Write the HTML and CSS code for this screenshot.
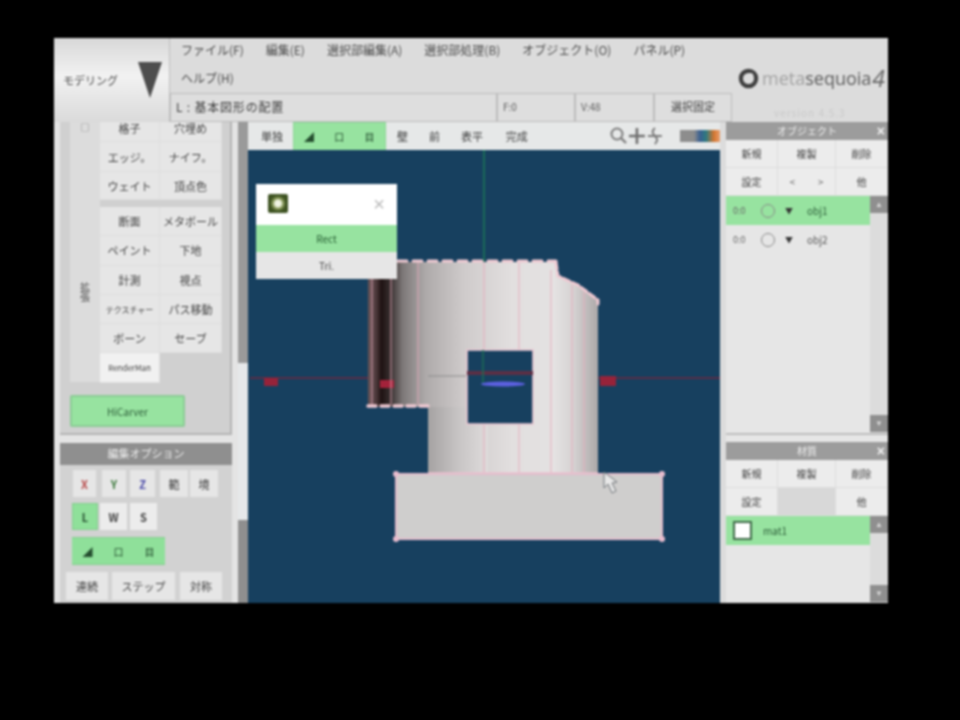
FILE: index.html
```html
<!DOCTYPE html>
<html lang="ja">
<head>
<meta charset="utf-8">
<title>Metasequoia 4</title>
<link rel="stylesheet" href="styles.css">
</head>
<body>
<div class="window">
  <header class="head">
    <div class="mode"><span class="mode-label">モデリング</span><svg class="mode-arrow" viewBox="0 0 24 36"><polygon points="0,0 24,0 12,36"/></svg></div>
    <div class="head-main">
      <div class="head-top">
        <nav class="menu">
          <span>ファイル(F)</span><span>編集(E)</span><span>選択部編集(A)</span><span>選択部処理(B)</span><span>オブジェクト(O)</span><span>パネル(P)</span><span>ヘルプ(H)</span>
        </nav>
        <div class="logo">
          <svg class="logo-mark" viewBox="0 0 22 22"><circle cx="11" cy="11" r="8" fill="none" stroke="#3f3f3f" stroke-width="4.4"/><circle cx="13" cy="8.5" r="3.2" fill="#dcdcdc"/></svg>
          <span class="logo-a">meta</span><span class="logo-b">sequoia</span><span class="logo-c">4</span>
        </div>
      </div>
      <div class="status">
        <div class="cell cell-wide">L : 基本図形の配置</div>
        <div class="cell cell-f">F:0</div>
        <div class="cell cell-v">V:48</div>
        <div class="cell cell-btn">選択固定</div>
        <div class="version">version 4.5.3</div>
      </div>
    </div>
  </header>

  <div class="body">
    <aside class="left">
      <div class="left-main">
        <section class="tools">
          <div class="side-tab"><span class="side-top">□</span><span class="side-label">拡張</span></div>
          <div class="tool-col">
            <div class="tool-grid">
              <div class="tb tb-cut">格子</div><div class="tb tb-cut">穴埋め</div>
              <div class="tb">エッジ。</div><div class="tb">ナイフ。</div>
              <div class="tb">ウェイト</div><div class="tb">頂点色</div>
            </div>
            <div class="tool-grid tool-grid-2">
              <div class="tb">断面</div><div class="tb">メタボール</div>
              <div class="tb">ペイント</div><div class="tb">下地</div>
              <div class="tb">計測</div><div class="tb">視点</div>
              <div class="tb tb-small">テクスチャー</div><div class="tb">パス移動</div>
              <div class="tb">ボーン</div><div class="tb">セーブ</div>
              <div class="tb tb-small tb-white">RenderMan</div>
            </div>
          </div>
          <div class="hicarver">HiCarver</div>
        </section>
        <section class="options">
          <div class="opt-title">編集オプション</div>
          <div class="opt-row opt-row-1">
            <div class="ob ob-x">X</div><div class="ob ob-y">Y</div><div class="ob ob-z">Z</div><div class="ob ob-k">範</div><div class="ob ob-k">境</div>
          </div>
          <div class="opt-row opt-row-2">
            <div class="ob ob-on">L</div><div class="ob ob-w">W</div><div class="ob ob-w">S</div>
          </div>
          <div class="opt-row opt-row-3">
            <div class="ob ob-on ob-join">◢</div><div class="ob ob-on ob-join">口</div><div class="ob ob-on ob-join">目</div>
          </div>
          <div class="opt-row opt-row-4">
            <div class="ob ob-s1">連続</div><div class="ob ob-s2">ステップ</div><div class="ob ob-s3">対称</div>
          </div>
        </section>
      </div>
      <div class="lscroll"><div class="ls-a"></div><div class="ls-b"></div><div class="ls-c"></div></div>
    </aside>

    <main class="center">
      <div class="toolbar">
        <div class="vb vb-1">単独</div>
        <div class="vgroup"><div class="vb vb-on">◢</div><div class="vb vb-on">口</div><div class="vb vb-on">目</div></div>
        <div class="vb vb-2">壁</div>
        <div class="vb vb-3">前</div>
        <div class="vb vb-4">表平</div>
        <div class="vb vb-5">完成</div>
        <svg class="view-icons" viewBox="0 0 56 22">
          <circle cx="7" cy="9" r="5.5" fill="none" stroke="#7c7c7c" stroke-width="2"/>
          <line x1="11" y1="13" x2="16" y2="18" stroke="#7c7c7c" stroke-width="2.4"/>
          <path d="M27 3v16M19 11h16" stroke="#707070" stroke-width="2.6" fill="none"/>
          <path d="M38 11h14M45 3c-3 3-3 5 0 8s3 5 0 8" stroke="#7c7c7c" stroke-width="2" fill="none"/>
        </svg>
        <div class="swatch"></div>
      </div>
      <div class="viewport">
        <svg class="scene" viewBox="248 150 472 453" preserveAspectRatio="none">
          <defs>
            <linearGradient id="gBack" gradientUnits="userSpaceOnUse" x1="368" y1="0" x2="560" y2="0">
              <stop offset="0" stop-color="#6a5557"/>
              <stop offset=".04" stop-color="#503c3e"/>
              <stop offset=".07" stop-color="#1e1212"/>
              <stop offset=".12" stop-color="#3a3232"/>
              <stop offset=".18" stop-color="#7d7878"/>
              <stop offset=".3" stop-color="#aeaaaa"/>
              <stop offset=".5" stop-color="#cfcbcb"/>
              <stop offset=".75" stop-color="#e2dfdf"/>
              <stop offset="1" stop-color="#e4e2e2"/>
            </linearGradient>
            <linearGradient id="gRight" gradientUnits="userSpaceOnUse" x1="552" y1="0" x2="600" y2="0">
              <stop offset="0" stop-color="#e6e4e4"/>
              <stop offset=".45" stop-color="#d5d2d2"/>
              <stop offset="1" stop-color="#a9a5a5"/>
            </linearGradient>
            <linearGradient id="gLow" gradientUnits="userSpaceOnUse" x1="428" y1="0" x2="490" y2="0">
              <stop offset="0" stop-color="#a5a2a2"/>
              <stop offset=".5" stop-color="#c8c5c5"/>
              <stop offset="1" stop-color="#e0dddd"/>
            </linearGradient>
          </defs>
          <line x1="484" y1="150" x2="484" y2="262" stroke="#1e7a57" stroke-width="1.5"/>
          <line x1="250" y1="378" x2="720" y2="378" stroke="#70293f" stroke-width="1.5"/>
          <rect x="264" y="378" width="14" height="8" fill="#96233a"/>
          <rect x="600" y="376" width="16" height="10" fill="#96233a"/>
          <polygon points="368,262 557,262 557,275 577,285 598,300 598,473 428,473 428,407 368,407" fill="url(#gBack)"/>
          <polygon points="552,272 557,275 577,285 598,300 598,473 552,473" fill="url(#gRight)"/>
          <rect x="428" y="407" width="60" height="66" fill="url(#gLow)"/>
          <line x1="428" y1="376" x2="467" y2="376" stroke="#8a8a8a" stroke-width="1"/>
          <rect x="380" y="380" width="14" height="8" fill="#a3223a"/>
          <g stroke="#e8a9bb" stroke-width="1.2" opacity=".75" fill="none">
            <line x1="372" y1="262" x2="372" y2="405"/>
            <line x1="391" y1="262" x2="391" y2="405"/>
            <line x1="418" y1="262" x2="418" y2="405"/>
            <line x1="484" y1="262" x2="484" y2="350"/>
            <line x1="484" y1="424" x2="484" y2="473"/>
            <line x1="519" y1="262" x2="519" y2="350"/>
            <line x1="519" y1="424" x2="519" y2="473"/>
            <line x1="551" y1="270" x2="551" y2="473"/>
            <line x1="572" y1="285" x2="572" y2="473"/>
            <line x1="584" y1="292" x2="584" y2="473"/>
          </g>
          <g fill="none" stroke="#f0c9d2" stroke-linecap="round">
            <polyline points="398,261 556,261" stroke-width="3" stroke-dasharray="9 6"/>
            <polyline points="556,262 558,276 578,285 598,300 598,304" stroke-width="3" stroke-dasharray="7 3"/>
            <polyline points="368,406 428,406" stroke-width="3.5" stroke-dasharray="8 5"/>
          </g>
          <rect x="467" y="350" width="66" height="74" fill="#17405f" stroke="#e9c5d0" stroke-width="1.6"/>
          <line x1="467" y1="373" x2="533" y2="373" stroke="#5c3045" stroke-width="4"/>
          <line x1="483" y1="350" x2="483" y2="385" stroke="#1c6b54" stroke-width="1.5"/>
          <ellipse cx="503" cy="384" rx="22" ry="2.6" fill="#5c60e0"/>
          <rect x="396" y="474" width="266" height="65" fill="#cfcecd" stroke="#e2bccb" stroke-width="2"/>
          <line x1="428" y1="473" x2="598" y2="473" stroke="#e8c2cf" stroke-width="1.5"/>
          <g fill="#e9bdcf">
            <circle cx="396" cy="474" r="3"/><circle cx="662" cy="474" r="3"/><circle cx="396" cy="539" r="3"/><circle cx="662" cy="539" r="3"/>
          </g>
          <polygon points="604,472 604,488 608,484 612,493 616,491 612,483 617,482" fill="#e8e8e8" stroke="#6f7478" stroke-width="1"/>
        </svg>
        <div class="dialog">
          <div class="dlg-head">
            <span class="dlg-icon"></span>
            <span class="dlg-close">×</span>
          </div>
          <div class="dlg-row dlg-on">Rect</div>
          <div class="dlg-row">Tri.</div>
        </div>
      </div>
    </main>

    <aside class="right">
      <section class="rpanel rpanel-obj">
        <div class="rtitle"><span>オブジェクト</span><b>×</b></div>
        <div class="rbtns">
          <div class="rb">新規</div><div class="rb">複製</div><div class="rb">削除</div>
          <div class="rb">設定</div><div class="rb rb-split"><span>&lt;</span><span>&gt;</span></div><div class="rb">他</div>
        </div>
        <div class="rlist">
          <div class="ritems">
            <div class="item item-on"><span class="i-vis">0:0</span><span class="i-lock"></span><span class="i-tri">▼</span><span class="i-name">obj1</span></div>
            <div class="item"><span class="i-vis">0:0</span><span class="i-lock"></span><span class="i-tri">▼</span><span class="i-name">obj2</span></div>
          </div>
          <div class="rscroll"><i>▲</i><i>▼</i></div>
        </div>
      </section>
      <section class="rpanel rpanel-mat">
        <div class="rtitle"><span>材質</span><b>×</b></div>
        <div class="rbtns">
          <div class="rb">新規</div><div class="rb">複製</div><div class="rb">削除</div>
          <div class="rb">設定</div><div class="rb rb-off"></div><div class="rb">他</div>
        </div>
        <div class="rlist">
          <div class="ritems">
            <div class="item item-on item-mat"><span class="i-check"></span><span class="i-name">mat1</span></div>
          </div>
          <div class="rscroll"><i>▲</i><i>▼</i></div>
        </div>
      </section>
    </aside>
  </div>
</div>
</body>
</html>
```

FILE: styles.css
```css
* { box-sizing: border-box; }
html, body { margin: 0; height: 100%; background: #000; }
body { padding: 38px 0 0 54px; overflow: hidden; }

.window {
  width: 834px;
  height: 565px;
  display: flex;
  flex-direction: column;
  background: #dcdcdc;
  color: #3c3c3c;
  font: 11px "Noto Sans CJK JP", "Noto Sans", sans-serif;
  filter: blur(1px);
  overflow: hidden;
}

/* header */
.head { height: 84px; display: flex; flex: none; }
.mode {
  width: 116px;
  display: flex;
  align-items: center;
  padding: 0 7px 0 9px;
  justify-content: space-between;
  background: linear-gradient(180deg, #d8d8d8 0%, #f2f2f2 45%, #dadada 100%);
  border-right: 1px solid #bdbdbd;
}
.mode-label { font-size: 11px; color: #444; white-space: nowrap; }
.mode-arrow { width: 24px; height: 36px; }
.mode-arrow polygon { fill: #4d4d4d; }
.head-main { flex: 1; display: flex; flex-direction: column; min-width: 0; }
.head-top { height: 55px; display: flex; position: relative; }
.menu {
  width: 570px;
  display: flex;
  flex-wrap: wrap;
  align-content: flex-start;
  padding: 0 0 0 11px;
  column-gap: 22px;
  color: #4c4c4c;
  font-size: 12px;
  line-height: 28px;
  margin-top: -2px;
}
.menu span { white-space: nowrap; }
.logo {
  position: absolute;
  right: 3px;
  top: 26px;
  display: flex;
  align-items: center;
  font: 18px "Open Sans", "Liberation Sans", sans-serif;
  line-height: 28px;
}
.logo-mark { width: 21px; height: 21px; margin-right: 3px; }
.logo-a { color: #a2a2a2; }
.logo-b { color: #5c5c5c; }
.logo-c { color: #666; font-size: 23px; font-style: italic; margin-left: 1px; }
.status { height: 29px; display: flex; align-items: stretch; position: relative; }
.cell {
  display: flex;
  align-items: center;
  background: #dedede;
  border: 1px solid #bcbcbc;
  padding: 0 0 3px 5px;
  color: #3c3c3c;
  white-space: nowrap;
}
.cell-wide { width: 327px; font-size: 12px; letter-spacing: .8px; }
.cell-f { width: 78px; color: #5c5c5c; font-size: 10px; }
.cell-v { width: 79px; color: #5c5c5c; font-size: 10px; }
.cell-btn { width: 78px; justify-content: center; padding: 0 0 3px; font-size: 11px; }
.version { margin-left: 42px; font-size: 10px; letter-spacing: 1px; color: #c9c9c9; line-height: 40px; white-space: nowrap; }

/* body */
.body { flex: 1; display: flex; min-height: 0; }

/* left */
.left { width: 194px; display: flex; flex: none; background: #e4e4e4; }
.left-main { width: 184px; display: flex; flex-direction: column; }
.tools {
  height: 313px;
  margin-left: 6px;
  width: 172px;
  background: #d0d0d0;
  border-right: 2px solid #b4b4b4;
  border-bottom: 2px solid #b4b4b4;
  display: grid;
  grid-template-columns: 40px 1fr;
  grid-template-rows: 260px auto;
  padding-left: 0;
}
.side-tab {
  grid-row: 1;
  margin-left: 10px;
  background: #dcdcdc;
  display: flex;
  flex-direction: column;
  align-items: center;
  color: #777;
  font-size: 9px;
}
.side-top { line-height: 12px; }
.side-label { writing-mode: vertical-rl; margin-top: 148px; font-size: 10px; color: #555; }
.tool-col { display: flex; flex-direction: column; gap: 7px; }
.tool-grid {
  display: grid;
  grid-template-columns: 60px 62px;
  grid-template-rows: 20px 30px 28px;
}
.tool-grid-2 { grid-template-rows: none; grid-auto-rows: 29.3px; }
.tb {
  background: #e6e6e6;
  border-right: 1px solid #dedede;
  border-bottom: 1px solid #dedede;
  display: flex;
  align-items: center;
  justify-content: center;
  color: #3f3f3f;
  font-size: 11px;
  white-space: nowrap;
}
.tb-cut { align-items: flex-start; line-height: 13px; }
.tb-small { font-size: 8px; }
.tb-white { background: #f1f1f1; }
.hicarver {
  grid-column: 1 / 3;
  margin: 13px 45px 0 10px;
  height: 32px;
  background: #97e3a0;
  border: 2px solid #8ccc95;
  border-radius: 2px;
  display: flex;
  align-items: center;
  justify-content: center;
  color: #2c5c38;
  font-size: 10px;
}
.options { margin: 8px 0 0 6px; width: 172px; flex: 1; background: #d2d2d2; position: relative; }
.opt-title {
  height: 22px;
  background: #8f8f8f;
  color: #ececec;
  text-align: center;
  font-size: 11px;
  line-height: 21px;
}
.opt-row { display: flex; height: 27px; }
.opt-row-1 { margin: 5px 0 0 13px; }
.opt-row-2 { margin: 6px 0 0 12px; }
.opt-row-3 { margin: 7px 0 0 12px; height: 28px; }
.opt-row-4 { margin: 7px 0 0 6px; height: 28px; }
.ob {
  width: 27px;
  background: #e6e6e6;
  display: flex;
  align-items: center;
  justify-content: center;
  font-weight: 700;
  color: #444;
  font-size: 11px;
}
.ob-x { color: #b84a4a; width: 23px; margin-right: 6px; }
.ob-y { color: #3d7a3d; width: 24px; margin-right: 4px; }
.ob-z { color: #4a4aa8; width: 25px; margin-right: 5px; }
.ob-k { width: 28px; margin-right: 2px; font-weight: 400; color: #333; }
.ob-on { background: #8fe09a; color: #244d2e; border: 1px solid #84cc8e; width: 26px; margin-right: 2px; }
.ob-w { margin-right: 3px; background: #ececec; }
.ob-join { width: 31px; margin: 0; font-size: 10px; font-weight: 400; border-width: 1px 0; }
.ob-s1 { width: 42px; margin-right: 4px; font-weight: 400; }
.ob-s2 { width: 63px; margin-right: 5px; font-weight: 400; }
.ob-s3 { width: 42px; font-weight: 400; }
.lscroll { width: 10px; display: flex; flex-direction: column; background: #e8e8e8; }
.ls-a { height: 241px; background: #9a9a9a; }
.ls-b { height: 157px; background: #e6e8ea; }
.ls-c { flex: 1; background: #8f8f8f; }

/* center */
.center { width: 472px; display: flex; flex-direction: column; flex: none; }
.toolbar { height: 28px; display: flex; align-items: stretch; background: #e6e8e8; padding-left: 10px; position: relative; flex: none; }
.vb { display: flex; align-items: center; justify-content: center; font-size: 11px; color: #3f3f3f; }
.vb-1 { width: 28px; margin-right: 7px; }
.vgroup { display: flex; width: 93px; background: #97e3a0; border: 1px solid #8cd696; border-bottom: 0; margin-right: 3px; }
.vb-on { flex: 1; color: #244d2e; font-size: 10px; }
.vb-2 { width: 28px; margin-right: 3px; }
.vb-3 { width: 30px; margin-right: 5px; }
.vb-4 { width: 35px; margin-right: 10px; }
.vb-5 { width: 35px; }
.view-icons { width: 56px; height: 22px; align-self: center; margin-left: 76px; }
.swatch {
  width: 40px;
  height: 12px;
  align-self: center;
  margin-left: 14px;
  background: linear-gradient(90deg, #8d8d8d 0 35%, #3a5f90 50%, #2d7a80 65%, #d5762f 85%, #e8a070 100%);
}
.viewport { flex: 1; position: relative; background: #17405f; overflow: hidden; }
.scene { position: absolute; inset: 0; width: 100%; height: 100%; display: block; }
.dialog {
  position: absolute;
  left: 8px;
  top: 34px;
  width: 141px;
  background: #fff;
}
.dlg-head { height: 41px; display: flex; align-items: center; justify-content: space-between; padding: 0 12px 2px 12px; }
.dlg-icon {
  width: 20px;
  height: 19px;
  background: radial-gradient(circle at 50% 50%, #f0f4e4 0 3px, #8e9f5f 5px, #3d5221 8px);
  border-radius: 2px;
}
.dlg-close { font-size: 20px; line-height: 20px; color: #b9b9b9; font-family: "Liberation Sans", sans-serif; }
.dlg-row { height: 27px; display: flex; align-items: center; justify-content: center; background: #e6e6e6; color: #444; font-size: 10px; }
.dlg-on { background: #97e3a0; color: #245c30; }

/* right */
.right { width: 162px; margin-left: 6px; flex: none; display: flex; flex-direction: column; background: #e6e6e6; }
.rpanel { display: flex; flex-direction: column; }
.rpanel-obj { height: 313px; border-bottom: 2px solid #bdbdbd; }
.rpanel-mat { flex: 1; margin-top: 7px; }
.rtitle {
  height: 18px;
  flex: none;
  background: #9c9c9c;
  color: #efefef;
  font-size: 10px;
  line-height: 18px;
  text-align: center;
  position: relative;
}
.rtitle b { position: absolute; right: 3px; top: 0; font: 700 14px/18px "Liberation Sans", sans-serif; color: #f2f2f2; }
.rbtns {
  display: grid;
  grid-template-columns: 52px 58px 52px;
  grid-auto-rows: 28px;
  flex: none;
}
.rb { display: flex; align-items: center; justify-content: center; background: #ececec; border-right: 1px solid #dcdcdc; border-bottom: 1px solid #dcdcdc; font-size: 10px; color: #3f3f3f; }
.rb-split { justify-content: space-around; color: #666; }
.rb-off { background: #d8d8d8; }
.rlist { flex: 1; display: flex; min-height: 0; }
.ritems { flex: 1; }
.item { height: 29px; display: flex; align-items: center; font-size: 10px; color: #555; }
.item-on { background: #97e3a0; color: #2c5c38; }
.i-vis { width: 35px; padding-left: 7px; font-size: 9px; color: #666; }
.i-lock { width: 14px; height: 14px; border: 1px solid #888; border-radius: 50%; margin-right: 10px; }
.i-tri { width: 22px; font-size: 8px; color: #333; }
.item-mat { padding-left: 7px; }
.i-check { width: 19px; height: 19px; background: #fff; border: 2px solid #3f6a48; margin-right: 11px; }
.rscroll { width: 18px; display: flex; flex-direction: column; justify-content: space-between; background: #dcdcdc; padding-bottom: 1px; }
.rscroll i { height: 17px; background: #8f8f8f; color: #d8d8d8; font: 8px/17px "Liberation Sans", sans-serif; text-align: center; }
```
